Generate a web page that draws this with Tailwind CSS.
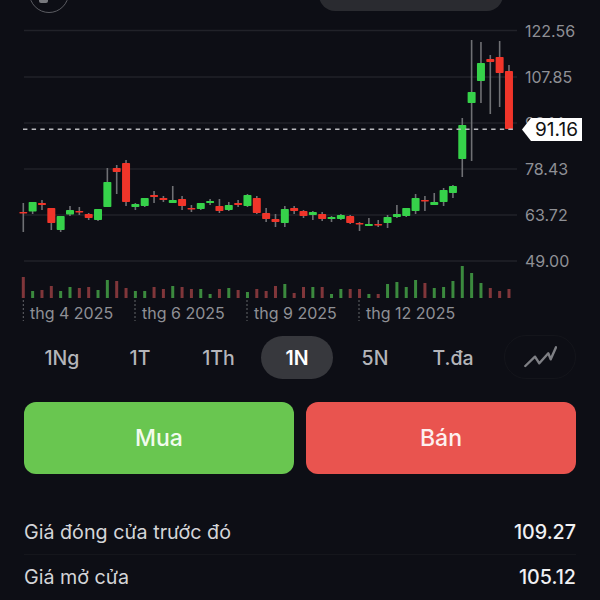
<!DOCTYPE html>
<html lang="vi">
<head>
  <meta charset="UTF-8">
  <meta name="viewport" content="width=device-width, initial-scale=1.0">
  <title>Biểu đồ</title>
  <script src="https://cdn.jsdelivr.net/npm/@tailwindcss/browser@4"></script>
</head>
<body class="bg-[#0d0e15] font-[Inter,sans-serif] w-[600px] h-[600px] overflow-hidden">
  <!-- chart: free canvas, candles are filled in by the script below -->
  <section class="relative h-[335px]">
    <div class="absolute left-[29px] top-[-27px] w-[40px] h-[40px] rounded-full border border-[#5b5c62]"></div>
    <div class="absolute left-[39px] top-0 w-[9px] h-[3px] rounded-b-[2px] bg-[#77787d]"></div>
    <div class="absolute left-[319px] top-[-30px] w-[184px] h-[41px] rounded-[16px] bg-[#2a2b30]"></div>

    <svg id="chart" width="600" height="335" class="absolute left-0 top-0"></svg>

    <span class="absolute left-[525px] top-[21px] text-[16px] leading-[20px] text-[#8f9095]">122.56</span>
    <span class="absolute left-[525px] top-[67px] text-[16px] leading-[20px] text-[#8f9095]">107.85</span>
    <span class="absolute left-[525px] top-[113px] text-[16px] leading-[20px] text-[#8f9095]">93.14</span>
    <span class="absolute left-[525px] top-[159px] text-[16px] leading-[20px] text-[#8f9095]">78.43</span>
    <span class="absolute left-[525px] top-[205px] text-[16px] leading-[20px] text-[#8f9095]">63.72</span>
    <span class="absolute left-[525px] top-[251px] text-[16px] leading-[20px] text-[#8f9095]">49.00</span>

    <div class="absolute left-[522px] top-[118px] flex h-[23px]">
      <svg width="9" height="23"><path d="M9 0 L0 11.5 L9 23 Z" fill="#ffffff"/></svg>
      <span class="bg-white text-[#111] text-[19px] leading-[23px] w-[51px] text-center">91.16</span>
    </div>

    <span class="absolute left-[30px] top-[304px] text-[16px] leading-[18px] text-[#8f9095]">thg 4 2025</span>
    <span class="absolute left-[142px] top-[304px] text-[16px] leading-[18px] text-[#8f9095]">thg 6 2025</span>
    <span class="absolute left-[254px] top-[304px] text-[16px] leading-[18px] text-[#8f9095]">thg 9 2025</span>
    <span class="absolute left-[366px] top-[304px] text-[16px] leading-[18px] text-[#8f9095]">thg 12 2025</span>
  </section>

  <!-- range tabs -->
  <nav class="flex items-center pl-[23px] pr-[24px] h-[44px] text-[19.5px] leading-[46px] font-medium text-[#b4b5ba]">
    <a class="w-[78px] h-[44px] text-center">1Ng</a>
    <a class="w-[78px] h-[44px] text-center">1T</a>
    <a class="w-[79px] h-[44px] text-center">1Th</a>
    <a class="w-[72px] ml-[3px] mr-[3px] h-[43px] leading-[45px] rounded-full bg-[#37383d] text-white font-semibold text-center">1N</a>
    <a class="w-[78px] h-[44px] text-center">5N</a>
    <a class="w-[78px] h-[44px] text-center">T.đa</a>
    <button class="ml-auto w-[72px] h-[44px] rounded-full border border-[#14151b] flex items-center justify-center">
      <svg width="34" height="22" viewBox="0 0 34 22" fill="none" stroke="#7e7f84" stroke-width="2.4" stroke-linejoin="round" stroke-linecap="round">
        <path d="M2.3 20 L12 10.7 L16.3 17.3 L25.3 7.3 L27.7 13.3 L33 1.3"/>
      </svg>
    </button>
  </nav>

  <!-- buy / sell -->
  <div class="flex gap-[12px] px-[24px] mt-[23px]">
    <button class="flex-1 h-[72px] rounded-[12px] bg-[#69c650] text-[#f2fbee] text-[23px] font-medium">Mua</button>
    <button class="flex-1 h-[72px] rounded-[12px] bg-[#e9544f] text-[#fdf0ef] text-[23px] font-medium">Bán</button>
  </div>

  <!-- stats -->
  <dl class="mx-[24px] mt-[37px] text-[19.7px]">
    <div class="flex justify-between items-center h-[44px] border-b border-[#15161c]">
      <dt class="text-[#d4d5d8]">Giá đóng cửa trước đó</dt>
      <dd class="text-[#f1f1f3] font-medium">109.27</dd>
    </div>
    <div class="flex justify-between items-center h-[46px] border-b border-[#15161c]">
      <dt class="text-[#d4d5d8]">Giá mở cửa</dt>
      <dd class="text-[#f1f1f3] font-medium">105.12</dd>
    </div>
  </dl>

  <script>
    const NS = 'http://www.w3.org/2000/svg';
    const chart = document.getElementById('chart');
    const GREEN = '#36d24a', RED = '#f0352a', WICK = '#6f7074';

    function add(tag, attrs) {
      const el = document.createElementNS(NS, tag);
      for (const k in attrs) el.setAttribute(k, attrs[k]);
      chart.appendChild(el);
    }

    [30.5, 77, 123, 169, 215, 261].forEach(y => {
      add('line', { x1: 24, x2: 517, y1: y, y2: y, stroke: '#212229', 'stroke-width': 1.4 });
    });

    [23.3, 135, 247, 359].forEach(x => {
      add('line', { x1: x, x2: x, y1: 300, y2: 321, stroke: '#65666b', 'stroke-width': 1, 'stroke-dasharray': '2 2' });
    });

    // [kind, bodyTop, bodyBottom, wickTop, wickBottom, volumeTop]
    const candles = [
      ['r',212,213,203,232,277],['g',202,211.5,202,214,291],['r',203,205,200,210,290],['r',208,223,208,230,286],
      ['g',216,230,216,232,291],['g',210,214.5,206,216,287],['r',211,212,207,215,288],['r',214,218,213,220,287],
      ['g',209,220,209,221,290],['g',182,207,168,207,280],['r',168,172,165,194,281],['r',163,202,160,206,288],
      ['g',204,207,203,210,291],['g',198,206,198,207,291],['r',195,197,191,203,287],['r',198,200,196,202,289],
      ['g',200,203,186,203,286],['r',199,206,196,210,287],['r',208,209,205,212,289],['g',203,209,203,210,289],
      ['g',201,203,199,205,294],['r',206,211,199,213,289],['g',205,210,202,211,288],['r',203,205,200,207,290],
      ['g',195,206,194,207,292],['r',198,213,196,214,289],['r',213,219,208,222,291],['r',219,222,214,227,286],
      ['g',209,223,206,227,284],['r',208,211,206,214,293],['r',211,216,210,218,287],['g',212,215,211,220,287],
      ['r',214,219,212,221,287],['g',217,219,216,222,294],['g',215,219,214,220,289],['r',216,223,215,224,289],
      ['r',223,224,222,231,289],['g',224,226,218,226,294],['r',224,225,220,227,294],['g',217,223,215,228,284],
      ['g',214,217,205,218,282],['g',208,216,208,217,287],['g',198,211,194,214,280],['r',200,201,196,211,283],
      ['g',202,205,193,205,288],['g',190,202,188,206,287],['g',186,193,185,198,281],['g',125,159,118,177,266],
      ['g',92,103,40,161,273],['g',63,81,42,103,283],['r',59,62,55,114,288],['r',57,73,41,107,291],['r',71,129,65,130,289],
    ];

    candles.forEach((c, i) => {
      const [kind, top, bottom, wickTop, wickBottom, volTop] = c;
      const x = 23.3 + i * 9.34;
      const fill = kind === 'g' ? GREEN : RED;
      add('line', { x1: x, x2: x, y1: wickTop, y2: wickBottom, stroke: WICK, 'stroke-width': 1.6 });
      add('rect', { x: x - 4, y: top, width: 8, height: Math.max(bottom - top, 1.5), rx: 0.8, fill: fill });
      add('rect', { x: x - 1.5, y: volTop, width: 3, height: 298 - volTop, fill: kind === 'g' ? '#3b8a3e' : '#80363a' });
    });

    add('line', { x1: 23, x2: 516, y1: 129.3, y2: 129.3, stroke: '#b9b9bd', 'stroke-width': 1.6, 'stroke-dasharray': '4.4 4.27' });
  </script>
</body>
</html>
